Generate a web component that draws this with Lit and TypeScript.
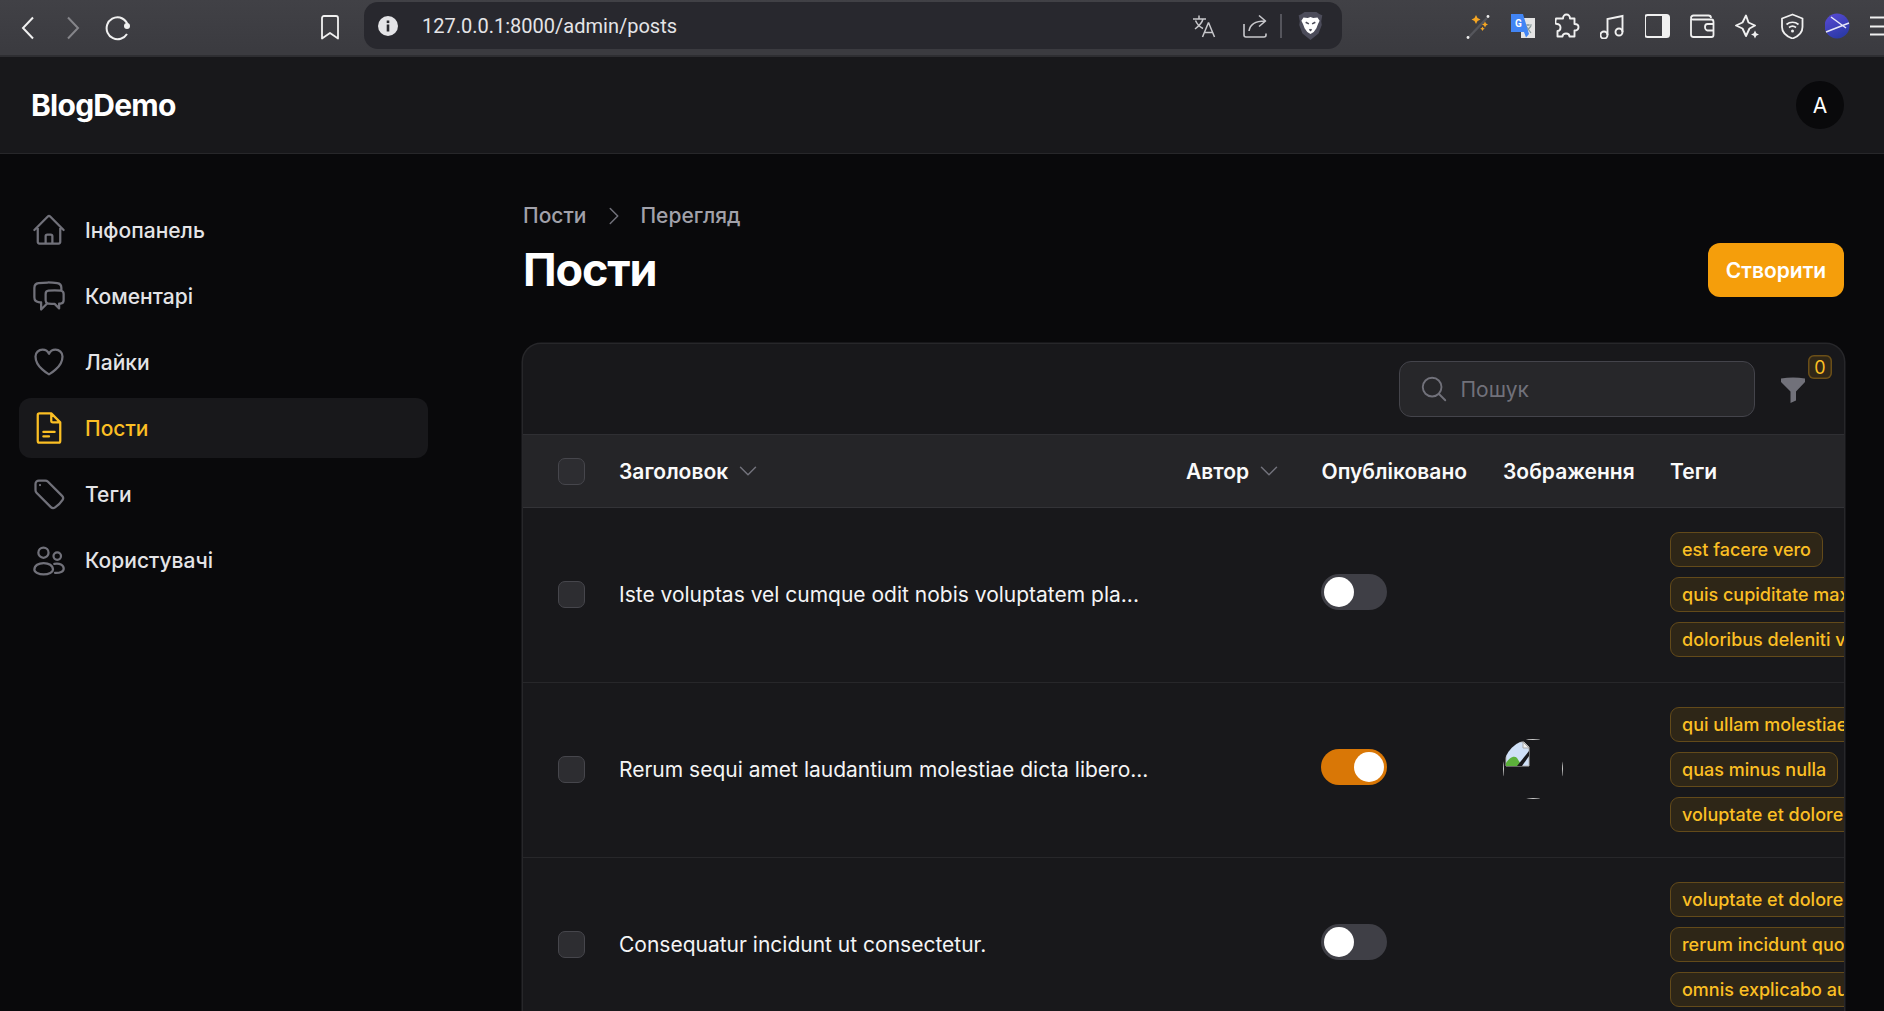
import { LitElement, html, css, svg } from "lit";
import { customElement } from "lit/decorators.js";

const ICONS: Record<string, string> = {
  home: "M2.25 12l8.954-8.955c.44-.439 1.152-.439 1.591 0L21.75 12M4.5 9.75v10.125c0 .621.504 1.125 1.125 1.125H9.75v-4.875c0-.621.504-1.125 1.125-1.125h2.25c.621 0 1.125.504 1.125 1.125V21h4.125c.621 0 1.125-.504 1.125-1.125V9.75M8.25 21h8.25",
  chat: "M20.25 8.511c.884.284 1.5 1.128 1.5 2.097v4.286c0 1.136-.847 2.1-1.98 2.193-.34.027-.68.052-1.02.072v3.091l-3-3c-1.354 0-2.694-.055-4.02-.163a2.115 2.115 0 01-.825-.242m9.345-8.334a2.126 2.126 0 00-.476-.095 48.64 48.64 0 00-8.048 0c-1.131.094-1.976 1.057-1.976 2.192v4.286c0 .837.46 1.58 1.155 1.951m9.345-8.334V6.637c0-1.621-1.152-3.026-2.76-3.235A48.455 48.455 0 0011.25 3c-2.115 0-4.198.137-6.24.402-1.608.209-2.76 1.614-2.76 3.235v6.226c0 1.621 1.152 3.026 2.76 3.235.577.075 1.157.14 1.74.194V21l4.155-4.155",
  heart: "M21 8.25c0-2.485-2.099-4.5-4.688-4.5-1.935 0-3.597 1.126-4.312 2.733-.715-1.607-2.377-2.733-4.313-2.733C5.1 3.75 3 5.765 3 8.25c0 7.22 9 12 9 12s9-4.78 9-12z",
  doc: "M5.6 2.25H13.5L19.5 8.25V20.6c0 .6-.5 1.15-1.1 1.15H5.6c-.6 0-1.1-.55-1.1-1.15V3.4c0-.6.5-1.15 1.1-1.15zM13.5 2.25v4.9c0 .6.5 1.1 1.1 1.1h4.9M8.25 14.6h7.5M8.25 17.6H12",
  tag: "M9.568 3H5.25A2.25 2.25 0 003 5.25v4.318c0 .597.237 1.17.659 1.591l9.581 9.581c.699.699 1.78.872 2.607.33a18.095 18.095 0 005.223-5.223c.542-.827.369-1.908-.33-2.607L11.16 3.66A2.25 2.25 0 009.568 3zM6 6h.008v.008H6V6z",
  users: "M11.7 7.1a3.4 3.4 0 11-6.800 0 3.400 3.400 0 016.800 0zM20 9.400a2.500 2.500 0 11-5 0 2.500 2.500 0 015 0zM2.250 18.500c0-2.800 2.800-4.500 6.200-4.500s6.200 1.700 6.200 4.500c0 1.600-2.800 3.100-6.200 3.100s-6.200-1.500-6.200-3.100zM15.500 14.600c3.500-.7 6.300.7 6.300 3.200 0 1.900-2.500 3-5.800 2.800",
  search: "M21 21l-5.197-5.197m0 0A7.5 7.5 0 105.196 5.196a7.5 7.5 0 0010.607 10.607z",
  down: "M19.5 8.25l-7.5 7.5-7.5-7.5",
  right: "M8.25 4.5l7.5 7.5-7.5 7.5",
};

const icon = (name: string, cls = "") => html`<svg class="ic ${cls}" viewBox="0 0 24 24" fill="none" stroke="currentColor" stroke-width="1.5" stroke-linecap="round" stroke-linejoin="round"><path d=${ICONS[name]}></path></svg>`;

const NAV = [
  ["home", "Інфопанель", false],
  ["chat", "Коментарі", false],
  ["heart", "Лайки", false],
  ["doc", "Пости", true],
  ["tag", "Теги", false],
  ["users", "Користувачі", false],
] as const;

const ROWS = [
  { title: "Iste voluptas vel cumque odit nobis voluptatem pla...", on: false, img: false, tags: ["est facere vero", "quis cupiditate maxime", "doloribus deleniti vero"] },
  { title: "Rerum sequi amet laudantium molestiae dicta libero...", on: true, img: true, tags: ["qui ullam molestiae", "quas minus nulla", "voluptate et dolore"] },
  { title: "Consequatur incidunt ut consectetur.", on: false, img: false, tags: ["voluptate et dolore", "rerum incidunt quo", "omnis explicabo aut"] },
];

const EXT = [
  svg`<path d="M3 25L22 5" stroke="#55565c" stroke-width="2.4"/><circle cx="3" cy="24.5" r="1.4" fill="#eee"/><circle cx="23" cy="3.5" r="1.4" fill="#eee"/><path d="M11 2l1.5 3L15.500 6.500 12.500 8 11 11 9.500 8 6.500 6.500 9.500 5zM20 8.500l1 2 2 1-2 1-1 2-1-2-2-1 2-1zM17.500 13.500l.8 1.500 1.500.8-1.500.8-.8 1.500-.8-1.500-1.500-.8 1.500-.8z" fill="#f5a623"/>`,
  svg`<rect x="11" y="5" width="14" height="20" fill="#e4e4e4"/><path d="M14 12h8M18 11v2M15 20l6-7M16 13l5 7" stroke="#8a9a9a" stroke-width="1.200" fill="none"/><path d="M1 1H13L19 21l-3 3.500L14 19H1z" fill="#4285f4"/><text x="5" y="14" font-family="Roboto, sans-serif" font-size="10" font-weight="700" fill="#fff">G</text>`,
  svg`<path d="M8 5.500C8 3 9.500 1.500 11.500 1.500S15 3 15 5.500H19.500V11C22 11 23.500 12 23.500 14S22 17.500 19.500 17.500V23.500H14.500C14.500 21.500 13 20.500 11 20.500S7.500 21.500 7.500 23.500H2.500V18C4.500 18 5.500 16.500 5.500 14.500S4 11 2 11 0 9.500 1 5.500z" fill="none" stroke="#f0f0f0" stroke-width="1.900" stroke-linejoin="round"/>`,
  svg`<circle cx="4" cy="22" r="3.500" fill="none" stroke="#f0f0f0" stroke-width="1.900"/><circle cx="19" cy="19" r="3.500" fill="none" stroke="#f0f0f0" stroke-width="1.900"/><path d="M7.500 22V6L22.500 3V19" fill="none" stroke="#f0f0f0" stroke-width="1.900"/>`,
  svg`<rect x="0" y="2" width="24" height="22" rx="2.500" fill="none" stroke="#f0f0f0" stroke-width="2"/><path d="M17 2h5.500c1 0 1.500.5 1.500 1.500v19c0 1-.5 1.500-1.500 1.500H17z" fill="#f0f0f0"/>`,
  svg`<path d="M1 6V21.500C1 23 2 24 3.500 24H21.500C22.800 24 23.500 23 23.500 22V9C23.500 7.500 22.800 6.500 21.500 6.500H3C2 6.500 1 6 1 5V5C1 3.500 2 2.500 3.500 2.500H18.500C20 2.500 21 3.500 21 5" fill="none" stroke="#f0f0f0" stroke-width="1.800"/><path d="M23.500 11H17.500C16 11 15 12.500 15 14S16 17.500 17.500 17.500H23.500" fill="none" stroke="#f0f0f0" stroke-width="1.800"/>`,
  svg`<path d="M11 2.500L13.500 9.500 20 12.500 14.500 15.500 11 23 7.500 15.500 1 12.500 7.500 9.500z" fill="none" stroke="#f0f0f0" stroke-width="1.900" stroke-linejoin="round"/><path d="M20 17.500l1.300 2.700 2.700 1.300-2.700 1.300-1.300 2.700-1.300-2.700-2.700-1.300 2.700-1.300z" fill="#f0f0f0"/>`,
  svg`<path d="M12.500 1.500L22.500 5.500V14C22.500 20 18 23.500 12.500 25.500 7 23.500 2 20 2 14V5.500z" fill="none" stroke="#f0f0f0" stroke-width="1.800" stroke-linejoin="round"/><path d="M6.500 11.500C10 8.500 15 8.500 18.500 11.500M9 14.500C11 13 14 13 16 14.500" fill="none" stroke="#f0f0f0" stroke-width="1.700"/><circle cx="12.500" cy="18" r="1.500" fill="#f0f0f0"/>`,
];

@customElement("app-root")
export class AppRoot extends LitElement {
  static styles = css`
    :host { display: block; height: 1011px; overflow: hidden; background: #09090b; font-family: Inter, "Liberation Sans", sans-serif; font-size: 21px; color: #fff; }
    * { box-sizing: border-box; }
    .ic { width: 36px; height: 36px; display: block; flex: none; }

    .browser { height: 57px; display: flex; align-items: center; background: linear-gradient(#414146, #3b3b40 90%); border-bottom: 2px solid #2e2e32; overflow: hidden; }
    .browser svg { display: block; flex: none; }
    .nav-ic { color: #f0f0f0; }
    .back { margin-left: 21px; width: 14px; height: 24px; }
    .fwd { margin-left: 31px; width: 14px; height: 24px; color: #85858a; }
    .reload { margin-left: 25px; width: 26px; height: 26px; }
    .mark { margin-left: 190px; width: 18px; height: 25px; }
    .omni { flex: none; margin-left: 25px; margin-bottom: 4px; width: 978px; height: 47px; background: #28282e; border-radius: 14px; display: flex; align-items: center; padding-left: 14px; padding-right: 19px; }
    .url { margin-left: 24px; font-family: Roboto, "Liberation Sans", sans-serif; font-size: 20px; color: #e4e4e7; }
    .omni-right { margin-left: auto; display: flex; align-items: center; }
    .divider { width: 2px; height: 24px; background: #55555c; margin: 0 16px 0 13px; }
    .exts { flex: none; margin-left: 123px; display: flex; gap: 19px; margin-bottom: 4px; }
    .ext { width: 26px; height: 26px; }
    .burger { width: 26px; height: 26px; }

    .top { height: 97px; background: #18181b; border-bottom: 1px solid #27272a; display: flex; align-items: center; justify-content: space-between; padding: 0 40px 0 31px; }
    .logo { font-size: 30px; font-weight: 700; letter-spacing: -0.75px; color: #fff; }
    .avatar { width: 48px; height: 48px; border-radius: 50%; background: #09090b; display: flex; align-items: center; justify-content: center; font-size: 21px; font-weight: 400; color: #fff; }

    .body { display: flex; }
    .side { width: 448px; flex: none; padding: 46px 20px 0 19px; display: flex; flex-direction: column; gap: 6px; }
    .item { height: 60px; padding: 0 12px; display: flex; align-items: center; gap: 18px; border-radius: 12px; font-weight: 500; color: #e4e4e7; }
    .item .ic { color: #71717a; }
    .item.active { background: #18181b; color: #fbbf24; }
    .item.active .ic { color: #fbbf24; }

    .main { flex: 1; min-width: 0; padding: 46px 40px 0 75px; }
    .crumbs { display: flex; align-items: center; height: 31px; color: #a1a1aa; font-weight: 500; }
    .crumbs .ic { width: 24px; height: 24px; color: #71717a; margin: 0 14px 0 16px; }
    .head { margin-top: 12px; height: 54px; display: flex; align-items: center; justify-content: space-between; }
    h1 { margin: 0; font-size: 45px; line-height: 54px; font-weight: 700; letter-spacing: -1.125px; color: #fff; }
    .create { height: 54px; width: 136px; border-radius: 12px; background: #f59e0b; color: #fff; font-weight: 600; display: flex; align-items: center; justify-content: center; }

    .card { margin-top: 47px; background: #18181b; border-radius: 18px; box-shadow: 0 0 0 1.5px #27272a; overflow: hidden; height: 800px; }
    .tools { height: 91px; border-bottom: 1.5px solid #2f2f33; display: flex; align-items: center; justify-content: flex-end; padding-right: 39px; }
    .search { width: 356px; height: 56px; margin-right: -0.5px; border-radius: 12px; background: #27272a; border: 1.5px solid #44444b; display: flex; align-items: center; gap: 12px; padding-left: 19px; color: #71717a; }
    .search .ic { width: 30px; height: 30px; }
    .filter { position: relative; width: 24px; height: 26px; margin-left: 27px; margin-top: 2px; }
    .filter svg { display: block; }
    .badge { position: absolute; left: 27px; top: -22px; width: 24px; height: 24px; border-radius: 6px; background: #302717; box-shadow: inset 0 0 0 1.5px #6b4f18; color: #fbbf24; font-size: 18px; display: flex; align-items: center; justify-content: center; }

    .grid { display: grid; grid-template-columns: 61.5px 567px 135.5px 181.5px 167px 1fr; padding-left: 34.5px; align-items: center; }
    .thead { height: 73px; background: #252528; border-bottom: 1.5px solid #333337; font-weight: 600; color: #fafafa; }
    .th { display: flex; align-items: center; gap: 8px; white-space: nowrap; }
    .th .ic { width: 24px; height: 24px; color: #71717a; }
    .check { width: 27px; height: 27px; border-radius: 7px; background: #2d2d31; border: 1.5px solid #46464c; }
    .row { height: 175px; border-bottom: 1.5px solid #27272a; padding-bottom: 1.5px; }
    .title { color: #f4f4f5; white-space: nowrap; }
    .toggle { width: 66px; height: 36px; border-radius: 18px; background: #3f3f46; padding: 3px; margin-bottom: 5px; margin-left: -1px; display: flex; }
    .toggle.on { background: #d97706; justify-content: flex-end; }
    .knob { width: 30px; height: 30px; border-radius: 50%; background: #fff; }
    .tags { display: flex; flex-direction: column; align-items: flex-start; gap: 10px; min-width: 0; }
    .tag { height: 35px; padding: 0 11px; display: flex; align-items: center; white-space: nowrap; font-size: 18px; font-weight: 500; color: #fbbf24; background: #2e2617; border: 1.5px solid #634a1a; border-radius: 9px; }
    .broken { width: 60px; height: 60px; display: block; }
  `;

  render() {
    return html`
      <div class="browser">
        <svg class="nav-ic back" viewBox="0 0 14 24" fill="none" stroke="currentColor" stroke-width="2"><path d="M12 1.500L2 12l10 10.500"></path></svg>
        <svg class="nav-ic fwd" viewBox="0 0 14 24" fill="none" stroke="currentColor" stroke-width="2"><path d="M2 1.500L12 12 2 22.500"></path></svg>
        <svg class="nav-ic reload" viewBox="0 0 26 26" fill="none" stroke="currentColor" stroke-width="2"><path d="M22 19A11 11 0 1 1 15 2.500"></path><circle cx="22" cy="11" r="3" fill="currentColor" stroke="none"></circle><path d="M15 2.500Q20 4 22.500 9"></path></svg>
        <svg class="nav-ic mark" viewBox="0 0 18 25" fill="none" stroke="currentColor" stroke-width="1.800"><path d="M1 3c0-1.200.8-2 2-2h12c1.200 0 2 .8 2 2v20.500l-8-5.500-8 5.500z" stroke-linejoin="round"></path></svg>
        <div class="omni">
          <svg width="20" height="20" viewBox="0 0 20 20"><circle cx="10" cy="10" r="10" fill="#e4e4e7"></circle><rect x="8.700" y="8.500" width="2.600" height="7" fill="#28282e"></rect><rect x="8.700" y="4.500" width="2.600" height="2.600" fill="#28282e"></rect></svg>
          <span class="url">127.0.0.1:8000/admin/posts</span>
          <div class="omni-right">
            <svg width="24" height="24" viewBox="0 0 24 24" fill="none" stroke="#c8c8cc" stroke-width="1.500"><path d="M1 5H14M7 1.500V5M3 15C7 12 10 9 11 5M3.500 6.500C5 10 8 13 11 14.500M16.500 8.500L10.500 23M16.500 8.500L22.500 23M12.500 18.500H20.500"></path></svg>
            <svg style="margin-left:27px" width="24" height="24" viewBox="0 0 24 24" fill="none" stroke="#c8c8cc" stroke-width="1.600"><path d="M1 10V21C1 22 1.700 23 3 23H21C22.300 23 23 22 23 21V19.500M6 17C7 10 12 7 22 7M16 1.500L22.500 7 16 12.500" stroke-linejoin="round"></path></svg>
            <div class="divider"></div>
            <svg width="25" height="29" viewBox="0 0 23 27"><path d="M6 1H17L20 3 22.500 4 21.500 9.500 22 13 19 21 11.500 27 4 21 1 13 1.500 9.500.5 4 3 3z" fill="#4c4c5a"></path><path d="M5 6L9 6.500 11.500 5.500 14 6.500 18 6 20 9 18.500 12 17 16 14.500 19.500 11.500 21.500 8.500 19.500 6 16 4.500 12 3 9z" fill="#fff"></path><path d="M7 10.500L10 12M16 10.500L13 12M10.500 17L11.500 18 12.500 17" stroke="#4c4c5a" stroke-width="1.500" fill="none"></path></svg>
          </div>
        </div>
        <div class="exts">
          ${EXT.map((e) => html`<svg class="ext" viewBox="0 0 26 26">${e}</svg>`)}
          <svg class="ext" viewBox="0 0 26 26"><defs><linearGradient id="g" x1="0" y1="0" x2="0.500" y2="1"><stop offset="0" stop-color="#5b4bd6"></stop><stop offset="1" stop-color="#2c3aa8"></stop></linearGradient></defs><circle cx="12" cy="13" r="12.500" fill="url(#g)"></circle><path d="M1 19L24 10M6 4L21 15" stroke="#e8e8f8" stroke-width="1.500" fill="none"></path></svg>
          <svg class="burger" viewBox="0 0 26 26" stroke="#f0f0f0" stroke-width="2.200"><path d="M0 4.500H26M0 13.500H26M0 21.500H26"></path></svg>
        </div>
      </div>

      <div class="top">
        <div class="logo">BlogDemo</div>
        <div class="avatar">A</div>
      </div>

      <div class="body">
        <nav class="side">
          ${NAV.map(([ic, label, active]) => html`<div class="item ${active ? "active" : ""}">${icon(ic)}<span>${label}</span></div>`)}
        </nav>
        <main class="main">
          <div class="crumbs"><span>Пости</span>${icon("right")}<span>Перегляд</span></div>
          <div class="head"><h1>Пости</h1><div class="create">Створити</div></div>
          <section class="card">
            <div class="tools">
              <div class="search">${icon("search")}<span>Пошук</span></div>
              <div class="filter">
                <svg width="24" height="26" viewBox="0 0 24 26" fill="#71717a"><path d="M0 1.500Q12-.5 24 1.500V5L15 14.500V23.500L9.500 26V14.500L0 5z"></path></svg>
                <div class="badge">0</div>
              </div>
            </div>
            <div class="grid thead">
              <div class="check"></div>
              <div class="th">Заголовок${icon("down")}</div>
              <div class="th">Автор${icon("down")}</div>
              <div class="th">Опубліковано</div>
              <div class="th">Зображення</div>
              <div class="th">Теги</div>
            </div>
            ${ROWS.map((r) => html`
              <div class="grid row">
                <div class="check"></div>
                <div class="title">${r.title}</div>
                <div></div>
                <div class="toggle ${r.on ? "on" : ""}"><div class="knob"></div></div>
                <div>${r.img ? html`
                  <svg class="broken" viewBox="0 0 60 60">
                    <defs><clipPath id="c"><circle cx="30" cy="30" r="30"></circle></clipPath></defs>
                    <g clip-path="url(#c)">
                      <rect x="0.500" y="0.500" width="59" height="59" fill="none" stroke="#c9c9c9"></rect>
                      <path d="M3 3H21L26 8V27H3z" fill="#cfe0f7" stroke="#b4b4b4"></path>
                      <path d="M20 3V9H26z" fill="#f2f2f2" stroke="#a8a8a8"></path>
                      <path d="M3 27V24C6 19 11 16 14 19L19 27z" fill="#5cb13b"></path>
                      <path d="M14 27L26 12V17L19 27z" fill="#18181b"></path>
                    </g>
                  </svg>` : ""}</div>
                <div class="tags">${r.tags.map((t) => html`<span class="tag">${t}</span>`)}</div>
              </div>`)}
          </section>
        </main>
      </div>
    `;
  }
}
